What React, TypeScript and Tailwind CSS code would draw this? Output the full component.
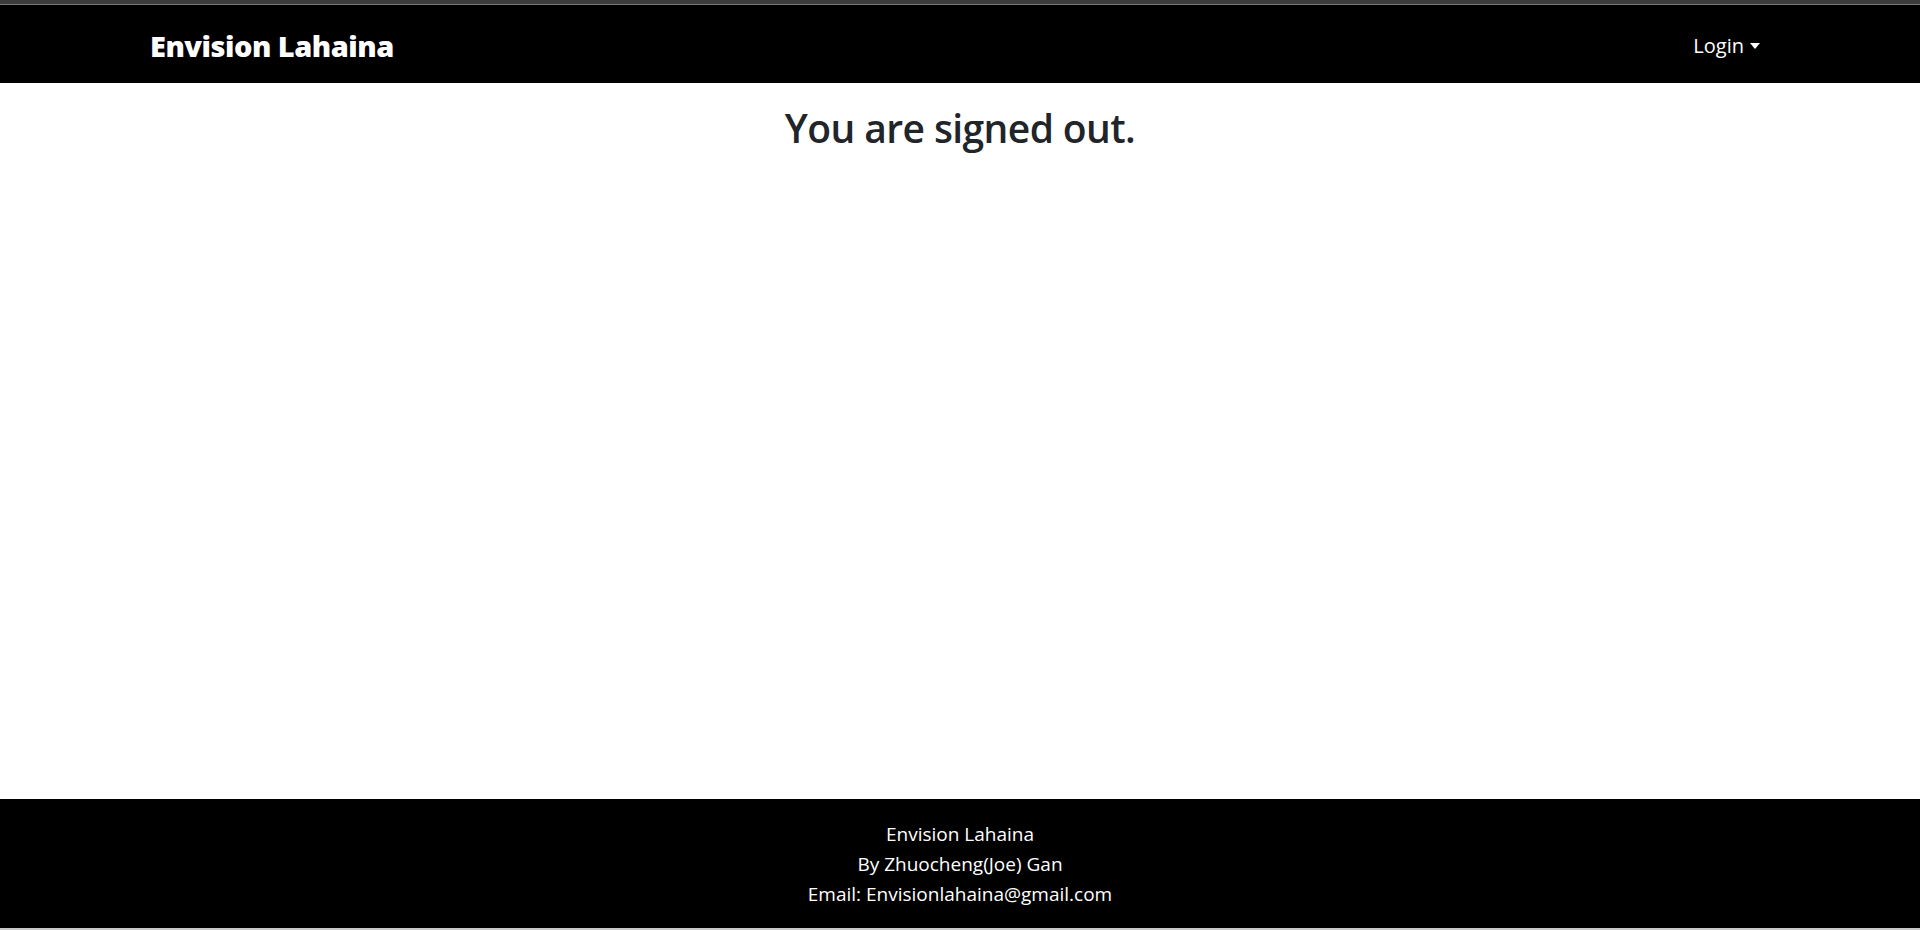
const FONT = "font-['Open_Sans','Noto_Sans',sans-serif]";

const NavBar = () => {
  return (
    <nav className="h-[78px] bg-black flex items-center justify-between pl-[150px] pr-[160px]">
      <a href="#" className="text-white text-[29px] font-extrabold tracking-[-0.5px] leading-none mt-[2px]">
        Envision Lahaina
      </a>
      <button className="flex items-center gap-[6px] text-white text-[20px] leading-none mt-[3px]">
        Login
        <span className="inline-block w-0 h-0 border-x-[5px] border-x-transparent border-t-[6px] border-t-white" />
      </button>
    </nav>
  );
};

const Footer = () => {
  return (
    <footer className="h-[129px] bg-black text-white text-[19px] leading-[30px] text-center pt-[20px]">
      <p>Envision Lahaina</p>
      <p>By Zhuocheng(Joe) Gan</p>
      <p>Email: Envisionlahaina@gmail.com</p>
    </footer>
  );
};

export default function App() {
  return (
    <div className={`h-[930px] flex flex-col ${FONT}`}>
      <div className="h-[5px] bg-[#3c3c3c] border-b border-[#7a7a7a]" />
      <NavBar />
      <main className="flex-1 bg-white">
        <h1 className="mt-[22px] text-center text-[39px] font-semibold tracking-[-0.6px] leading-[1.2] text-[#212529]">
          You are signed out.
        </h1>
      </main>
      <Footer />
      <div className="h-[2px] bg-[#c8c8c8]" />
    </div>
  );
}
